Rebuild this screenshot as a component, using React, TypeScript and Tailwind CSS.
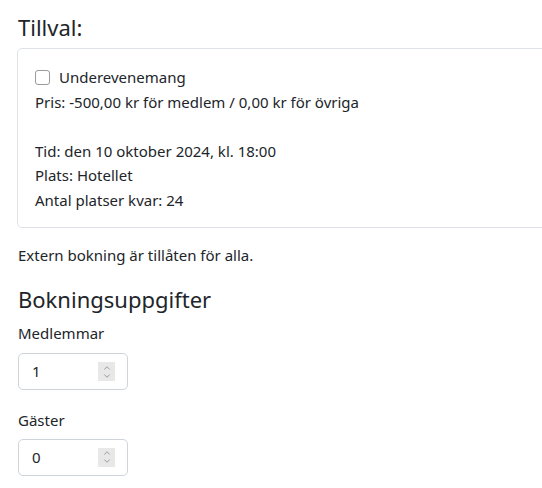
import { ChevronUp, ChevronDown } from 'lucide-react';

function NumberField({ value }: { value: string }) {
  return (
    <div className="flex h-[37px] w-[110px] items-center justify-between rounded-[5px] border border-[#ced4da] bg-white pl-[13px] pr-[12px]">
      <span>{value}</span>
      <div className="flex h-[19px] w-[17px] flex-col items-center justify-center bg-[#e8e8e8] text-[#8a8a8a]">
        <ChevronUp size={10} strokeWidth={2} className="-mb-px" />
        <ChevronDown size={10} strokeWidth={2} className="-mt-px" />
      </div>
    </div>
  );
}

export default function App() {
  return (
    <div className="min-h-[488px] w-[542px] overflow-hidden bg-white pl-[18px] pt-[13px] font-['Noto_Sans',sans-serif] text-[15px] leading-[24.5px] text-[#212529]">
      <h4 className="mb-[6px] text-[22px] leading-[29px]">Tillval:</h4>
      <div className="-ml-px mr-[-10px] rounded-[5px] border border-[#dee2e6] px-[17px] pb-[15px] pt-[16px]">
        <label className="flex items-center gap-[9px]">
          <span className="h-[15px] w-[15px] rounded-[3px] border border-[#9b9b9b] bg-white" />
          <span>Underevenemang</span>
        </label>
        <div>Pris: -500,00 kr för medlem / 0,00 kr för övriga</div>
        <div className="h-[24.5px]" />
        <div>Tid: den 10 oktober 2024, kl. 18:00</div>
        <div>Plats: Hotellet</div>
        <div>Antal platser kvar: 24</div>
      </div>
      <p className="mt-[15px]">Extern bokning är tillåten för alla.</p>
      <h4 className="mt-[17px] text-[22px] leading-[29px]">Bokningsuppgifter</h4>
      <div className="mt-[7px]">Medlemmar</div>
      <div className="mt-[8px]">
        <NumberField value="1" />
      </div>
      <div className="mt-[18px]">Gäster</div>
      <div className="mt-[6px]">
        <NumberField value="0" />
      </div>
    </div>
  );
}
